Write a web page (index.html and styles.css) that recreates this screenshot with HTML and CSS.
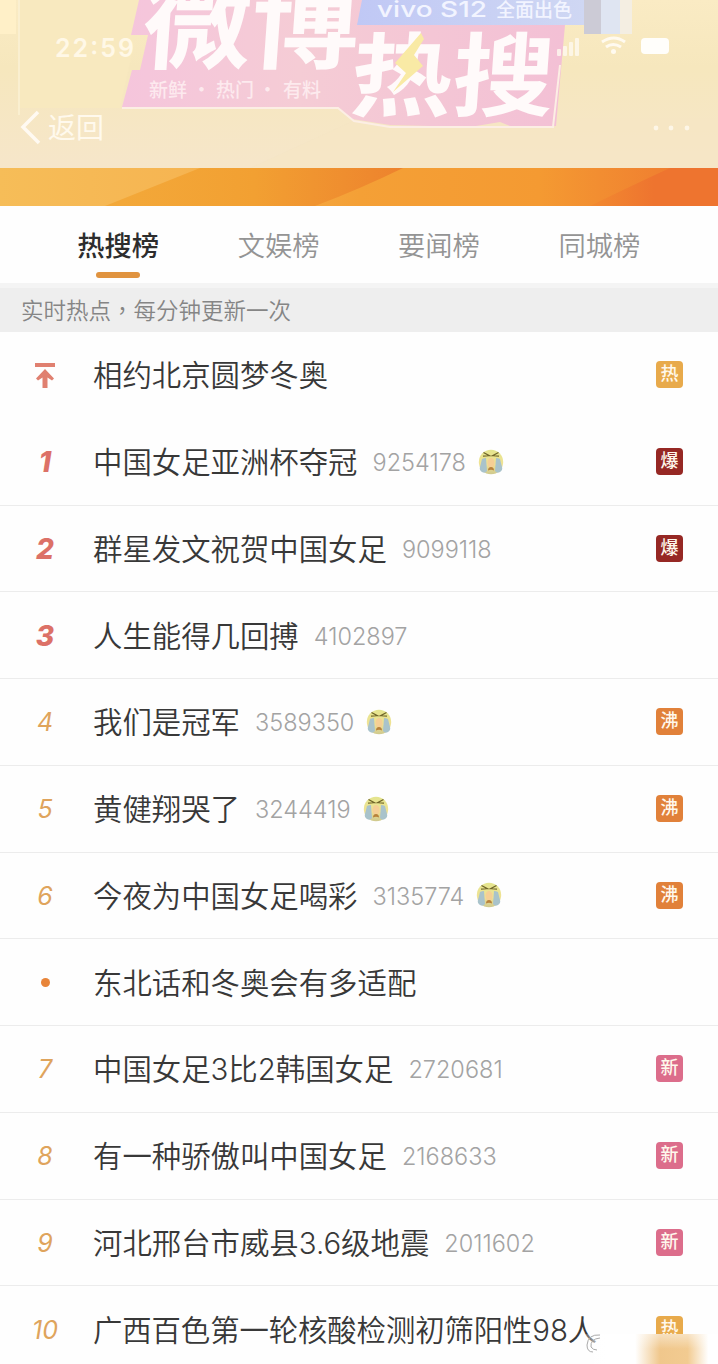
FILE: index.html
```html
<!DOCTYPE html>
<html lang="zh-CN">
<head>
<meta charset="utf-8">
<title>微博热搜</title>
<link rel="stylesheet" href="styles.css">
</head>
<body>
<svg class="defs" width="0" height="0" aria-hidden="true">
  <defs>
    <linearGradient id="face" x1="0" y1="0" x2="0" y2="1"><stop offset="0" stop-color="#e4e58e"/><stop offset=".6" stop-color="#f0e294"/><stop offset="1" stop-color="#cfc98e"/></linearGradient>
    <symbol id="cry" viewBox="0 0 26 26">
      <circle cx="13" cy="13" r="12.2" fill="url(#face)"/>
      <path d="M4 10q2-1 4-1l1 13q-2 3-5 1-3-2-2-5zM22 10q-2-1-4-1l-1 13q2 3 5 1 3-2 2-5z" fill="#a9c3cb"/>
      <ellipse cx="13" cy="14" rx="3.6" ry="5" fill="#f5cf95"/>
      <path d="M5.500 3.500l5.500 3-6 .6M20.500 3.500l-5.500 3 6 .6" fill="none" stroke="#6f6529" stroke-width="1.4"/>
      <path d="M10 21.500q0-3.500 3-3.500t3 3.500q-3-1.500-6 0z" fill="#b8823c"/>
    </symbol>
  </defs>
</svg>
<div class="screen">
  <header class="hero">
    <svg width="718" height="206" viewBox="0 0 718 206">
      <defs>
        <linearGradient id="sky" x1="0" y1="0" x2="0" y2="1"><stop offset="0" stop-color="#faebc4"/><stop offset=".4" stop-color="#f6e7bd"/><stop offset="1" stop-color="#f6e6ca"/></linearGradient>
        <linearGradient id="pink" x1="0" y1="0" x2="1" y2="0"><stop offset="0" stop-color="#f5c5dc"/><stop offset=".4" stop-color="#f5ccd5"/><stop offset="1" stop-color="#f3c0d5"/></linearGradient>
        <linearGradient id="blue" x1="0" y1="0" x2="1" y2="0"><stop offset="0" stop-color="#c0c8f5"/><stop offset="1" stop-color="#cfd7f3"/></linearGradient>
        <linearGradient id="band" x1="0" y1="0" x2="1" y2="0"><stop offset="0" stop-color="#f6bd58"/><stop offset=".25" stop-color="#f6b552"/><stop offset=".5" stop-color="#f4a036"/><stop offset=".75" stop-color="#f49a32"/><stop offset="1" stop-color="#ee752f"/></linearGradient>
        <linearGradient id="wedge" x1="0" y1="0" x2="1" y2="0"><stop offset="0" stop-color="#f3a93a"/><stop offset=".5" stop-color="#f2a032"/><stop offset="1" stop-color="#ed822d"/></linearGradient>
        <linearGradient id="ember" x1="0" y1="0" x2="1" y2="0"><stop offset="0" stop-color="#f28a30"/><stop offset=".5" stop-color="#ee742f"/></linearGradient>
      </defs>
      <rect width="718" height="168" fill="url(#sky)"/>
      <path d="M0 0H16V34H0z" fill="#fff0c8"/>
      <path d="M18 0H144L120 108H18z" fill="#f8e9bf"/>
      <path d="M19 0V115" stroke="#faefd0" stroke-width="2"/>
      <path d="M250 168L360 118H718V168z" fill="#f5e5c3" opacity=".5"/>
      <path d="M139 0H370V25H565L556 126H510L500 122 470 127 390 125 352 119 338 107H122L132 70H140L148 35H131z" fill="url(#pink)"/>
      <path d="M122 108H338L354 121 390 127H553L560 65" fill="none" stroke="#fceee4" stroke-width="2"/>
      <path d="M362 0H584V25H357z" fill="url(#blue)"/>
      <path d="M584 0h17v34h-17z" fill="#cccbd6"/><path d="M601 0h19v34h-19z" fill="#dfe5f2"/><path d="M620 0h12v34h-12z" fill="#f4eee2"/>
      <g class="logo" fill="#fffafa">
        <text transform="translate(141 61) skewX(-4)" font-size="99" textLength="216" lengthAdjust="spacingAndGlyphs">微博</text>
        <text transform="translate(349 109) skewX(-4)" font-size="91" textLength="203" lengthAdjust="spacingAndGlyphs">热搜</text>
      </g>
      <path d="M421 33L395 63 406 73 393 92 423 66 414 55 424 39z" fill="#f9eaa5"/>
      <g class="tagline" fill="#fff2f4" font-size="19"><text x="149" y="97">新鲜</text><text x="192" y="97">·</text><text x="216" y="97">热门</text><text x="258" y="97">·</text><text x="283" y="97">有料</text></g>
      <g class="sponsor" fill="#f2f4ff"><text x="377" y="17" font-size="22" textLength="110" lengthAdjust="spacingAndGlyphs">vivo S12</text><text x="496" y="17" font-size="19">全面出色</text></g>
      <text class="clock" x="55" y="57" textLength="79">22:59</text>
      <g fill="#fffaf0" opacity=".8">
        <rect x="557" y="49" width="4" height="7" rx="1"/><rect x="563" y="46" width="4" height="10" rx="1"/><rect x="569" y="42" width="4" height="14" rx="1"/><rect x="575" y="38" width="4" height="18" rx="1"/>
        <circle cx="656" cy="128" r="2.4"/><circle cx="671" cy="128" r="2.4"/><circle cx="687" cy="128" r="2.4"/>
      </g>
      <rect x="641" y="38" width="28" height="16" rx="4" fill="#fffefb"/>
      <path d="M602 42q12-8 23 0M606 47q7-5 15 0" fill="none" stroke="#fffaf0" stroke-width="3"/><circle cx="613.500" cy="51.500" r="2.500" fill="#fffaf0"/>
      <path d="M38 112L23 127 39 143" fill="none" stroke="#fffaf2" stroke-width="3.500"/>
      <text class="back" x="48" y="138" textLength="56">返回</text>
      <rect y="168" width="718" height="38" fill="url(#band)"/>
      <path d="M105 206L150 188 200 168H403Q360 189 315 206z" fill="url(#wedge)"/>
      <path d="M590 206Q635 184 670 168H718V206z" fill="url(#ember)"/>
    </svg>
  </header>

  <nav class="tabs">
    <span class="tab tab-on">热搜榜</span><span class="tab">文娱榜</span><span class="tab">要闻榜</span><span class="tab">同城榜</span>
  </nav>
  <div class="notice">实时热点<span class="comma" lang="zh-TW">，</span>每分钟更新一次</div>

  <main class="list">
    <div class="row plain"><span class="rank"><svg width="22" height="26" viewBox="0 0 22 26"><path d="M1 3H21" stroke="#e08070" stroke-width="4"/><path d="M11 7L20 16.500 18 18.500 13.500 15.500V26H8.500V15.500L4 18.500 2 16.500z" fill="#e08070"/></svg></span><span class="title">相约北京圆梦冬奥</span><span class="tag hot">热</span></div>
    <div class="row"><span class="rank top">1</span><span class="title">中国女足亚洲杯夺冠</span><span class="count">9254178</span><svg class="emoji"><use href="#cry"/></svg><span class="tag boom">爆</span></div>
    <div class="row"><span class="rank top">2</span><span class="title">群星发文祝贺中国女足</span><span class="count">9099118</span><span class="tag boom">爆</span></div>
    <div class="row"><span class="rank top">3</span><span class="title">人生能得几回搏</span><span class="count">4102897</span></div>
    <div class="row"><span class="rank">4</span><span class="title">我们是冠军</span><span class="count">3589350</span><svg class="emoji"><use href="#cry"/></svg><span class="tag boil">沸</span></div>
    <div class="row"><span class="rank">5</span><span class="title">黄健翔哭了</span><span class="count">3244419</span><svg class="emoji"><use href="#cry"/></svg><span class="tag boil">沸</span></div>
    <div class="row"><span class="rank">6</span><span class="title">今夜为中国女足喝彩</span><span class="count">3135774</span><svg class="emoji"><use href="#cry"/></svg><span class="tag boil">沸</span></div>
    <div class="row"><span class="rank"><i class="dot"></i></span><span class="title">东北话和冬奥会有多适配</span></div>
    <div class="row"><span class="rank">7</span><span class="title">中国女足3比2韩国女足</span><span class="count">2720681</span><span class="tag new">新</span></div>
    <div class="row"><span class="rank">8</span><span class="title">有一种骄傲叫中国女足</span><span class="count">2168633</span><span class="tag new">新</span></div>
    <div class="row"><span class="rank">9</span><span class="title">河北邢台市威县3.6级地震</span><span class="count">2011602</span><span class="tag new">新</span></div>
    <div class="row"><span class="rank">10</span><span class="title long">广西百色第一轮核酸检测初筛阳性98人</span><span class="tag hot">热</span></div>
  </main>
  <div class="haze"><svg width="138" height="30" viewBox="0 0 138 30">
    <defs>
      <linearGradient id="fade" x1="0" x2="1"><stop offset="0" stop-color="#fff" stop-opacity="0"/><stop offset=".2" stop-color="#fff"/><stop offset=".4" stop-color="#fff"/><stop offset=".58" stop-color="#f0c78c"/><stop offset=".78" stop-color="#f2cb91"/><stop offset=".93" stop-color="#fff"/></linearGradient>
      <linearGradient id="veil" x1="0" y1="0" x2="0" y2="1"><stop offset="0" stop-color="#fff" stop-opacity=".45"/><stop offset=".5" stop-color="#fff" stop-opacity="0"/></linearGradient>
    </defs>
    <rect width="138" height="30" fill="url(#fade)"/><rect x="30" width="108" height="30" fill="url(#veil)"/>
    <path d="M20 1Q8 0 7 11q0 7 6 7M20 4Q10 5 11 13q2 3 6 3" fill="none" stroke="#aaa" stroke-width="1"/>
  </svg></div>
</div>
</body>
</html>
```
FILE: styles.css
```css
* { box-sizing: border-box; }
body { margin: 0; background: #fefefe; font-family: Inter, "Noto Sans CJK SC", sans-serif; }
.defs { position: absolute; }
.screen { position: relative; width: 718px; height: 1364px; overflow: hidden; display: flex; flex-direction: column; }
.hero, .hero svg { display: block; height: 206px; flex: none; }
.logo { font-family: "Noto Sans CJK SC", sans-serif; font-weight: 700; }
.tagline { font-family: "Noto Sans CJK SC", sans-serif; font-weight: 500; opacity: .8; }
.sponsor { font-family: Inter, "Noto Sans CJK SC", sans-serif; font-weight: 500; }
.clock { font-size: 25px; font-weight: 600; fill: #fff8e7; }
.back { font-size: 28px; fill: #fff9ed; }

.tabs { height: 77px; flex: none; display: grid; grid-template-columns: repeat(4, 160.4px); padding-left: 38px; }
.tab { display: flex; flex-direction: column; align-items: center; padding-top: 21px; font-size: 27.3px; line-height: 40px; font-weight: 350; color: #949494; }
.tab-on { font-weight: 500; color: #2d2d2d; }
.tab-on::after { content: ""; width: 44px; height: 6px; margin-top: 5px; border-radius: 3px; background: #e0933f; }

.notice { height: 49px; flex: none; padding-left: 21px; border-top: 5px solid #f4f4f4; background: #eee; font-size: 22.5px; line-height: 43px; font-weight: 350; color: #858585; }
.comma { font-family: "Noto Sans CJK TC", sans-serif; }

.list { flex: none; }
.row { height: 86.75px; display: flex; align-items: center; padding-right: 35px; border-bottom: 1px solid #ececec; }
.plain { border-bottom-color: transparent; }
.rank { width: 90px; margin-right: 3px; padding-top: 1px; display: flex; justify-content: center; align-items: center; font-size: 25px; font-style: italic; color: #dfa45c; }
.top { font-size: 28px; font-weight: 800; color: #dc7167; }
.dot { width: 9px; height: 9px; border-radius: 50%; background: #e8853a; }
.title { margin-top: 3px; font-size: 29.4px; line-height: 44px; color: #383838; white-space: nowrap; font-weight: 350; }
.long { letter-spacing: -.1px; }
.count { margin: 3px 0 0 15px; font-size: 23.5px; line-height: 30px; font-weight: 350; color: #a3a3a3; letter-spacing: 0; }
.emoji { width: 26px; height: 26px; margin-left: 12px; }
.tag { width: 27px; height: 27px; margin-left: auto; border-radius: 4px; color: #fff8ec; font-size: 18px; line-height: 25px; text-align: center; font-weight: 500; }
.hot { background: #e8aa4b; }
.boom { background: #962824; }
.boil { background: #e1813a; }
.new { background: #dc6d8b; }
.haze { position: absolute; right: 0; bottom: 0; height: 30px; }
```
